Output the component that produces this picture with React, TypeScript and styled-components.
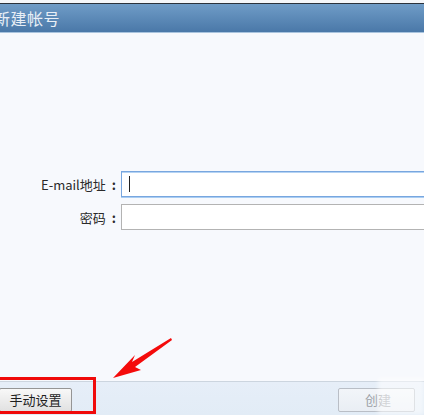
import React from "react";
import styled, { createGlobalStyle } from "styled-components";

const Global = createGlobalStyle`
  html, body { margin: 0; padding: 0; background: #ffffff; }
  body { font-family: "Noto Sans CJK SC", "Noto Sans", sans-serif; }
  * { box-sizing: border-box; }
`;

const Window = styled.div`
  position: relative;
  width: 424px;
  height: 415px;
  overflow: hidden;
  display: flex;
  flex-direction: column;
  background: #f7f9fd;
`;

const TopStrip = styled.div`
  height: 4px;
  background: #f4f6f9;
  border-bottom: 1px solid #2a323c;
`;

const TitleBar = styled.div`
  height: 29px;
  display: flex;
  align-items: center;
  background: linear-gradient(#6f9cc7, #4a78a8);
  border-bottom: 1px solid #a9c4de;
`;

const Title = styled.span`
  margin-left: -6px;
  font-size: 16px;
  color: #e9eff6;
  letter-spacing: 0.5px;
  white-space: nowrap;
`;

const Content = styled.div`
  flex: 1;
  display: flex;
  flex-direction: column;
  gap: 7px;
  padding-top: 138px;
`;

const Row = styled.div`
  display: flex;
  align-items: center;
  width: 441px;
`;

const Label = styled.label`
  width: 121px;
  flex-shrink: 0;
  padding-right: 5px;
  text-align: right;
  font-size: 13px;
  color: #2a2a2a;
  white-space: nowrap;
`;

const Colon = styled.span`
  margin-left: 6px;
  font-weight: 700;
`;

const Field = styled.div<{ $focused?: boolean }>`
  position: relative;
  width: 320px;
  flex-shrink: 0;
  height: 26px;
  background: #ffffff;
  border: 1px solid ${(p) => (p.$focused ? "#78a6df" : "#b3b3b3")};
  box-shadow: ${(p) => (p.$focused ? "inset 0 1px 0 #b5d3f3, 0 1px 0 #a9cdf2" : "none")};
`;

const Caret = styled.span`
  position: absolute;
  left: 7px;
  top: 4px;
  width: 1px;
  height: 16px;
  background: #222;
`;

const Footer = styled.div`
  height: 34px;
  border-top: 1px solid #ccd5df;
  background: linear-gradient(#e6eef8, #e2ecf6);
  display: flex;
  align-items: center;
  justify-content: space-between;
  padding: 0 9px 0 0;
`;

const Button = styled.button<{ $disabled?: boolean }>`
  height: 24px;
  padding: 0 9px;
  margin-top: 2px;
  font-family: "Noto Sans CJK SC", sans-serif;
  font-size: 13px;
  border-radius: 2px;
  color: ${(p) => (p.$disabled ? "#9b9fa6" : "#1e1e1e")};
  border: 1px solid ${(p) => (p.$disabled ? "#b9bec6" : "#959595")};
  background: ${(p) =>
    p.$disabled ? "linear-gradient(#f2f5f9, #e9eef4)" : "linear-gradient(#f8f8f8, #e1e1e1)"};
`;

const ManualButton = styled(Button)`
  width: 73px;
  margin-left: -1px;
`;

const CreateButton = styled(Button)`
  width: 77px;
  text-align: left;
  padding-left: 26px;
`;

const Highlight = styled.div`
  position: absolute;
  left: -3px;
  top: 377px;
  width: 99px;
  height: 37px;
  border: 3px solid #f00a0a;
  pointer-events: none;
`;

const Watermark = styled.div`
  position: absolute;
  left: 378px;
  top: 378px;
  width: 46px;
  height: 37px;
  background: rgba(255, 255, 255, 0.55);
  filter: blur(2px);
  pointer-events: none;
`;

const ArrowSvg = styled.svg`
  position: absolute;
  left: 108px;
  top: 336px;
  pointer-events: none;
`;

export default function App() {
  return (
    <>
      <Global />
      <Window>
        <TopStrip />
        <TitleBar>
          <Title>新建帐号</Title>
        </TitleBar>
        <Content>
          <Row>
            <Label>
              E-mail地址<Colon>:</Colon>
            </Label>
            <Field $focused>
              <Caret />
            </Field>
          </Row>
          <Row>
            <Label>
              密码<Colon>:</Colon>
            </Label>
            <Field />
          </Row>
        </Content>
        <Footer>
          <ManualButton>手动设置</ManualButton>
          <CreateButton $disabled>创建</CreateButton>
        </Footer>
        <Highlight />
        <Watermark />
        <ArrowSvg width="66" height="46" viewBox="0 0 66 46">
          <path d="M63 2 L24 26 L27 19 L5 42 L33 34 L27 31 L64 4 Z" fill="#f40b0b" />
        </ArrowSvg>
      </Window>
    </>
  );
}
